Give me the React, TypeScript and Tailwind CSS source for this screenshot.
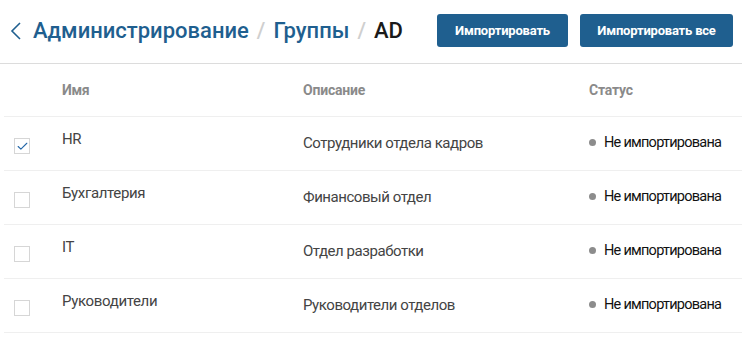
import { Check } from 'lucide-react'

type Group = {
  name: string
  description: string
  checked: boolean
}

const groups: Group[] = [
  { name: 'HR', description: 'Сотрудники отдела кадров', checked: true },
  { name: 'Бухгалтерия', description: 'Финансовый отдел', checked: false },
  { name: 'IT', description: 'Отдел разработки', checked: false },
  { name: 'Руководители', description: 'Руководители отделов', checked: false },
]

const cols = 'grid grid-cols-[58px_241px_286px_1fr]'

export default function App() {
  return (
    <div className="h-[344px] w-[742px] overflow-hidden bg-white font-['Roboto',sans-serif]">
      <div className="flex h-[64px] items-center justify-between border-b border-[#dcdcdc] pl-[10px] pr-[9px] pb-[2px]">
        <div className="flex items-center text-[22px] font-medium leading-none">
          <svg width="11" height="18" viewBox="0 0 11 18" fill="none" className="mt-[1px]">
            <path d="M10 1 L2 9 L10 17" stroke="#1f5f8f" strokeWidth="1.6" />
          </svg>
          <span className="ml-[12px] text-[#1f5f8f]">Администрирование</span>
          <span className="mx-[8px] text-[#cfcfcf]">/</span>
          <span className="text-[#1f5f8f]">Группы</span>
          <span className="mx-[8px] text-[#cfcfcf]">/</span>
          <span className="text-[#1a1a1a]">AD</span>
        </div>
        <div className="flex gap-[12px]">
          <button className="h-[33px] w-[131px] rounded-[3px] bg-[#1f5f8f] text-[13px] font-bold tracking-[-0.2px] text-white">
            Импортировать
          </button>
          <button className="h-[33px] w-[153px] rounded-[3px] bg-[#1f5f8f] text-[13px] font-bold tracking-[-0.2px] text-white">
            Импортировать все
          </button>
        </div>
      </div>

      <div className="ml-[4px]">
        <div className={`${cols} h-[53px] items-center border-b border-[#efefef] text-[14px] font-bold text-[#8a8a8a]`}>
          <div />
          <div className="tracking-[-0.3px]">Имя</div>
          <div className="tracking-[-0.2px]">Описание</div>
          <div className="tracking-[-0.2px]">Статус</div>
        </div>
        {groups.map((g) => (
          <div key={g.name} className={`${cols} h-[54px] border-b border-[#efefef] text-[15px]`}>
            <div className="pl-[10px] pt-[21px]">
              <div className="flex h-[16px] w-[16px] items-center justify-center border border-[#d6d6d6] bg-white">
                {g.checked && <Check className="h-[13px] w-[13px] text-[#2467a8]" strokeWidth={2} />}
              </div>
            </div>
            <div className="pt-[11px] tracking-[-0.35px] text-[#444]">{g.name}</div>
            <div className="pt-[15px] tracking-[-0.45px] text-[#444]">{g.description}</div>
            <div className="flex items-start pt-[15px] text-[#111]">
              <span className="mr-[8px] mt-[7px] h-[7px] w-[7px] shrink-0 rounded-full bg-[#8c8c8c]" />
              <span className="text-[14.5px] tracking-[-0.75px]">Не импортирована</span>
            </div>
          </div>
        ))}
      </div>
    </div>
  )
}
